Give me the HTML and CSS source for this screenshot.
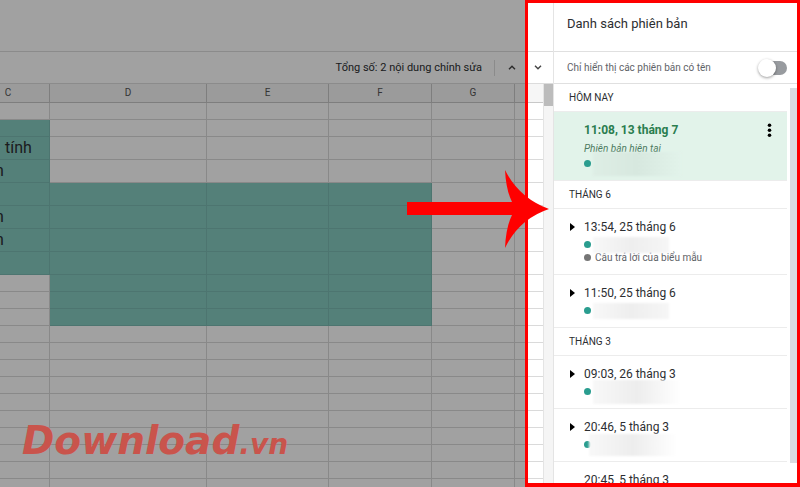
FILE: index.html
```html
<!DOCTYPE html>
<html lang="vi">

<head>
    <meta charset="UTF-8">
    <meta name="viewport" content="width=device-width, initial-scale=1.0">
    <title>Danh sách phiên bản</title>
    <link rel="stylesheet" href="styles.css">
</head>

<body>
    <div class="app">
        <main class="main">
            <div class="topbar"></div>
            <div class="toolbar">
                <span class="total">Tổng số: 2 nội dung chỉnh sửa</span>
                <button class="nav" aria-label="Trước"><svg width="8" height="5" viewBox="0 0 8 5"><path d="M1 4.2L4 1.2L7 4.2"/></svg></button>
                <button class="nav" aria-label="Sau"><svg width="8" height="5" viewBox="0 0 8 5"><path d="M1 0.8L4 3.8L7 0.8"/></svg></button>
            </div>
            <div class="sheet">
                <table class="grid">
                    <colgroup>
                        <col class="col_c"><col class="col_d"><col class="col_e"><col class="col_f"><col class="col_g"><col>
                    </colgroup>
                    <thead>
                        <tr><th class="first">C</th><th>D</th><th>E</th><th>F</th><th>G</th><th></th></tr>
                    </thead>
                    <tbody>
                        <tr><td></td><td></td><td></td><td></td><td></td><td></td></tr>
                        <tr><td class="fill"></td><td></td><td></td><td></td><td></td><td></td></tr>
                        <tr class="tall"><td class="fill word">tính</td><td></td><td></td><td></td><td></td><td></td></tr>
                        <tr class="tall"><td class="fill cut">n</td><td></td><td></td><td></td><td></td><td></td></tr>
                        <tr class="tall"><td class="fill"></td><td class="fill"></td><td class="fill"></td><td class="fill"></td><td></td><td></td></tr>
                        <tr class="tall"><td class="fill cut">n</td><td class="fill"></td><td class="fill"></td><td class="fill"></td><td></td><td></td></tr>
                        <tr class="tall"><td class="fill cut">n</td><td class="fill"></td><td class="fill"></td><td class="fill"></td><td></td><td></td></tr>
                        <tr class="tall"><td class="fill"></td><td class="fill"></td><td class="fill"></td><td class="fill"></td><td></td><td></td></tr>
                        <tr><td></td><td class="fill"></td><td class="fill"></td><td class="fill"></td><td></td><td></td></tr>
                        <tr><td></td><td class="fill"></td><td class="fill"></td><td class="fill"></td><td></td><td></td></tr>
                        <tr><td></td><td class="fill"></td><td class="fill"></td><td class="fill"></td><td></td><td></td></tr>
                        <tr><td></td><td></td><td></td><td></td><td></td><td></td></tr>
                        <tr><td></td><td></td><td></td><td></td><td></td><td></td></tr>
                        <tr><td></td><td></td><td></td><td></td><td></td><td></td></tr>
                        <tr><td></td><td></td><td></td><td></td><td></td><td></td></tr>
                        <tr><td></td><td></td><td></td><td></td><td></td><td></td></tr>
                        <tr><td></td><td></td><td></td><td></td><td></td><td></td></tr>
                        <tr><td></td><td></td><td></td><td></td><td></td><td></td></tr>
                        <tr><td></td><td></td><td></td><td></td><td></td><td></td></tr>
                        <tr><td></td><td></td><td></td><td></td><td></td><td></td></tr>
                        <tr><td></td><td></td><td></td><td></td><td></td><td></td></tr>
                    </tbody>
                </table>
                <div class="scroll"><div class="thumb"></div></div>
            </div>
        </main>

        <aside class="panel">
            <h1 class="title">Danh sách phiên bản</h1>
            <div class="filter">
                <label for="named">Chỉ hiển thị các phiên bản có tên</label>
                <input class="switch" type="checkbox" id="named">
            </div>
            <div class="history">
                <div class="list">
                    <h2 class="month">HÔM NAY</h2>
                    <div class="item current">
                        <div class="time">11:08, 13 tháng 7</div>
                        <div class="note">Phiên bản hiện tại</div>
                        <div class="user"><i class="dot"></i><span class="smudge high"></span></div>
                        <button class="more" aria-label="Thao tác khác"><svg width="5" height="15" viewBox="0 0 5 15"><circle cx="2.5" cy="2.3" r="1.8"/><circle cx="2.5" cy="7.3" r="1.8"/><circle cx="2.5" cy="12.3" r="1.8"/></svg></button>
                    </div>
                    <h2 class="month">THÁNG 6</h2>
                    <div class="item">
                        <button class="open" aria-label="Mở rộng"></button>
                        <div class="time">13:54, 25 tháng 6</div>
                        <div class="user"><i class="dot"></i><span class="smudge"></span></div>
                        <div class="user"><i class="dot gray"></i>Câu trả lời của biểu mẫu</div>
                    </div>
                    <div class="item">
                        <button class="open" aria-label="Mở rộng"></button>
                        <div class="time">11:50, 25 tháng 6</div>
                        <div class="user"><i class="dot"></i><span class="smudge"></span></div>
                    </div>
                    <h2 class="month">THÁNG 3</h2>
                    <div class="item">
                        <button class="open" aria-label="Mở rộng"></button>
                        <div class="time">09:03, 26 tháng 3</div>
                        <div class="user"><i class="dot"></i><span class="smudge high"></span></div>
                    </div>
                    <div class="item">
                        <button class="open" aria-label="Mở rộng"></button>
                        <div class="time">20:46, 5 tháng 3</div>
                        <div class="user"><i class="dot"></i><span class="smudge wide"></span></div>
                    </div>
                    <div class="item">
                        <div class="time">20:45, 5 tháng 3</div>
                    </div>
                </div>
                <div class="track"></div>
            </div>
        </aside>

        <!-- lớp phủ tối, khung đỏ và mũi tên -->
        <div class="shade"></div>
        <div class="frame"></div>
        <svg class="arrow" width="144" height="78" viewBox="0 0 144 78"><path d="M1 32H106Q100 20 99 0Q113 28 143 39Q113 49 99 78Q100 57 106 45H1Z"/></svg>
        <div class="mark">Download<small>.vn</small></div>
    </div>
</body>

</html>
```
FILE: styles.css
```css
* {
    box-sizing: border-box;
}

body {
    margin: 0;
    font-family: Roboto, "Liberation Sans", sans-serif;
    color: #2c2e31;
}

button {
    padding: 0;
    border: 0;
    background: none;
}

.app {
    position: relative;
    display: flex;
    height: 100vh;
    overflow: hidden;
    background: #fff;
}

/* bảng tính */
.main {
    flex: 1;
    min-width: 0;
    display: flex;
    flex-direction: column;
}

.topbar {
    flex: none;
    height: 52px;
    border-bottom: 1px solid #dcdcdc;
}

.toolbar {
    flex: none;
    height: 32px;
    display: flex;
    align-items: center;
    justify-content: flex-end;
    padding-right: 2px;
    border-bottom: 1px solid #dcdcdc;
}

.total {
    padding-right: 12px;
    border-right: 1px solid #dcdcdc;
    font-size: 11px;
    line-height: 16px;
}

.nav {
    width: 26px;
    height: 20px;
    display: flex;
    align-items: center;
    justify-content: center;
}

.total + .nav {
    margin-left: 4px;
}

.nav svg {
    fill: none;
    stroke: #444;
    stroke-width: 1.4;
}

.sheet {
    flex: 1;
    min-height: 0;
    display: flex;
    overflow: hidden;
}

.grid {
    flex: 1;
    width: 100%;
    align-self: flex-start;
    table-layout: fixed;
    border-spacing: 0;
}

.col_c { width: 50px; }
.col_d { width: 157px; }
.col_e { width: 122px; }
.col_f { width: 103px; }
.col_g { width: 83px; }

.grid th,
.grid td {
    height: 17px;
    padding: 0;
    border-right: 1px solid #dadada;
    border-bottom: 1px solid #dadada;
    overflow: hidden;
    white-space: nowrap;
}

.grid th {
    height: 19px;
    background: #f6f6f6;
    border-color: #c8c8c8;
    font-size: 10px;
    font-weight: 400;
    line-height: 16px;
    color: #555;
}

.grid th.first {
    padding-right: 33px;
}

.grid .tall td {
    height: 23px;
    font-size: 16px;
    line-height: 20px;
}

.grid td:last-child,
.grid th:last-child {
    border-right: 0;
}

.grid td.fill {
    background: #86cbc0;
    border-color: #7ab9b2;
}

.grid td.word {
    padding-left: 5px;
}

.grid td.cut {
    text-indent: -5px;
}

.scroll {
    flex: none;
    width: 10px;
    border-left: 1px solid #e4e4e4;
    background: #f5f5f5;
}

.thumb {
    height: 22px;
    background: #bcbcbc;
}

/* cột lịch sử phiên bản */
.panel {
    flex: none;
    width: 247px;
    display: flex;
    flex-direction: column;
    border-left: 1px solid #e4e4e4;
}

.title {
    flex: none;
    height: 52px;
    margin: 0;
    padding: 14px 13px 0;
    border-bottom: 1px solid #e0e0e0;
    font-size: 13px;
    font-weight: 400;
    line-height: 20px;
}

.filter {
    flex: none;
    height: 32px;
    display: flex;
    align-items: center;
    justify-content: space-between;
    padding: 0 13px;
    border-bottom: 1px solid #e0e0e0;
    font-size: 10px;
    color: #5f6368;
}

.switch {
    appearance: none;
    position: relative;
    width: 26px;
    height: 14px;
    margin: 0;
    border-radius: 7px;
    background: #989b9f;
}

.switch::before {
    content: "";
    position: absolute;
    left: -3px;
    top: -2px;
    width: 18px;
    height: 18px;
    border-radius: 50%;
    background: #fff;
    box-shadow: 0 1px 3px rgba(0, 0, 0, 0.4);
}

.history {
    flex: 1;
    min-height: 0;
    display: flex;
    gap: 3px;
    padding-right: 3px;
    overflow: hidden;
}

.list {
    flex: 1;
}

.track {
    width: 7px;
    height: 375px;
    margin-top: 4px;
    background: #dadce0;
}

.month {
    height: 28px;
    margin: 0;
    padding-left: 15px;
    border-bottom: 1px solid #ececec;
    font-size: 10px;
    font-weight: 400;
    line-height: 28px;
    color: #2c2e31;
}

.item {
    position: relative;
    padding: 9px 0 10px 30px;
    border-bottom: 1px solid #ececec;
}

.time {
    margin-bottom: 2px;
    font-size: 12px;
    line-height: 18px;
}

.note {
    font-size: 10px;
    font-style: italic;
    line-height: 16px;
    color: #4c7a60;
}

.user {
    display: flex;
    align-items: center;
    gap: 4px;
    height: 13px;
    font-size: 10px;
    color: #5f6368;
}

.dot {
    flex: none;
    width: 7px;
    height: 7px;
    border-radius: 50%;
    background: #2a9d8f;
}

.dot.gray {
    background: #757575;
}

.current {
    background: #e2f3ea;
}

.current .time {
    font-weight: 700;
    color: #2a7d4f;
}

/* tên người dùng bị làm mờ */
.smudge {
    position: relative;
    width: 76px;
    height: 16px;
    margin-left: -2px;
    background: linear-gradient(90deg, #f8f8f8, #eeeeee 50%, #f6f6f6);
    filter: blur(1px);
}

.smudge.high {
    width: 88px;
    height: 24px;
    background: linear-gradient(90deg, #f8f8f8, #ededed 50%, #fff);
}

.smudge.wide {
    width: 88px;
    height: 22px;
    margin-left: -6px;
    background: linear-gradient(90deg, #f8f8f8, #ededed 50%, #fff);
}

.current .smudge.high {
    background: linear-gradient(90deg, #deeee5, #d7e8df 50%, #e2f3ea);
}

.more {
    position: absolute;
    top: 9px;
    right: 13px;
    width: 9px;
    height: 18px;
    display: flex;
    align-items: center;
    justify-content: center;
}

.open {
    position: absolute;
    left: 16px;
    top: 14px;
    border-left: 5px solid #000;
    border-top: 4px solid transparent;
    border-bottom: 4px solid transparent;
}

/* phần chú thích nằm trên ảnh */
.shade {
    position: absolute;
    left: 0;
    right: 275px;
    top: 0;
    bottom: 0;
    background: rgba(0, 0, 0, 0.37);
}

.frame {
    position: absolute;
    right: 0;
    top: 0;
    bottom: 0;
    width: 275px;
    border: 3px solid #f00;
    border-bottom-width: 4px;
    pointer-events: none;
}

.arrow {
    position: absolute;
    right: 250px;
    top: 170px;
    fill: #f00;
}

.mark {
    position: absolute;
    left: 22px;
    bottom: 22px;
    font-family: "DejaVu Sans", sans-serif;
    font-size: 39px;
    font-weight: 700;
    font-style: italic;
    line-height: 40px;
    color: #c9544c;
}

.mark small {
    font-size: 28px;
}
```
